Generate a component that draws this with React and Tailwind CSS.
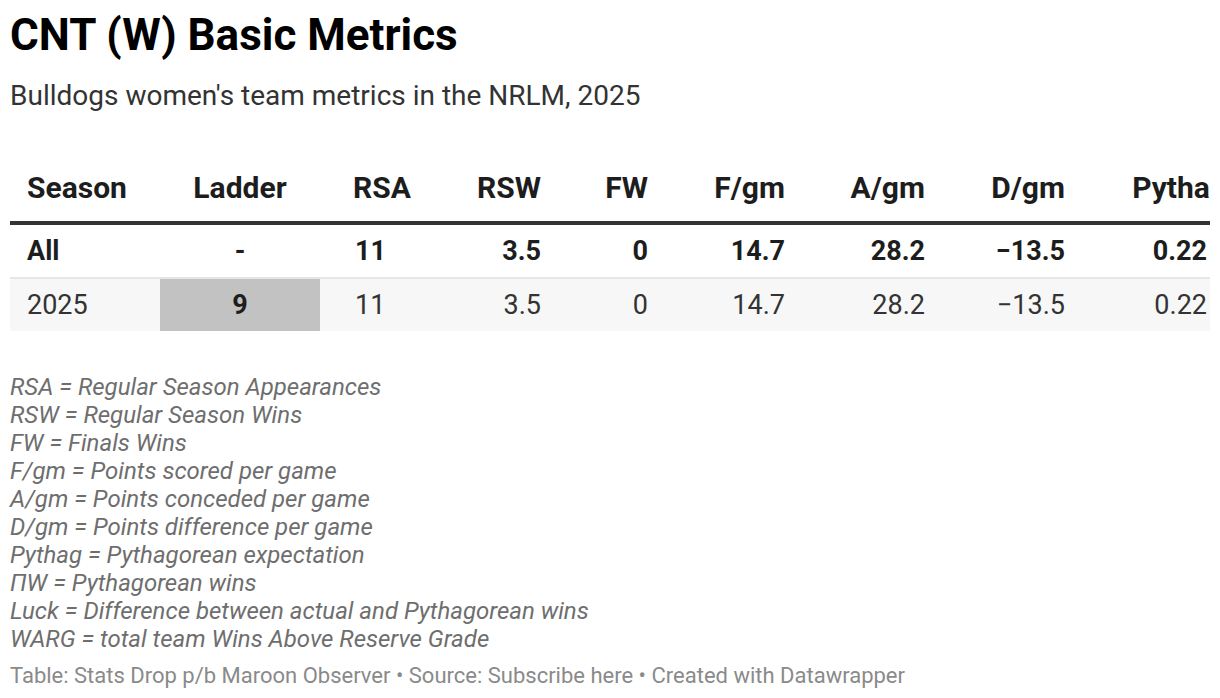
import React from "react";

const cols = "grid grid-cols-[150px_160px_110px_125px_107px_137px_140px_140px_157px]";

const notes = [
  "RSA = Regular Season Appearances",
  "RSW = Regular Season Wins",
  "FW = Finals Wins",
  "F/gm = Points scored per game",
  "A/gm = Points conceded per game",
  "D/gm = Points difference per game",
  "Pythag = Pythagorean expectation",
  "ΠW = Pythagorean wins",
  "Luck = Difference between actual and Pythagorean wins",
  "WARG = total team Wins Above Reserve Grade",
];

function Row({ vals, bold, bg, last }) {
  const w = bold ? "font-bold text-[#1d1d1d]" : "font-normal text-[#333333]";
  return (
    <div className={`${cols} ${bg} ${w} text-[27px] leading-[32px]`}>
      <div className="pl-[17px] py-[10px]">{vals[0]}</div>
      <div className={`text-center py-[10px] ${last ? "bg-[#c2c2c2] font-bold text-[#1d1d1d]" : ""}`}>{vals[1]}</div>
      <div className="pl-[35px] py-[10px]">{vals[2]}</div>
      <div className="text-right pr-[14px] py-[10px]">{vals[3]}</div>
      <div className="text-right pr-[14px] py-[10px]">{vals[4]}</div>
      <div className="text-right pr-[14px] py-[10px]">{vals[5]}</div>
      <div className="text-right pr-[14px] py-[10px]">{vals[6]}</div>
      <div className="text-right pr-[14px] py-[10px]">{vals[7]}</div>
      <div className="text-right pr-[29px] py-[10px]">{vals[8]}</div>
    </div>
  );
}

export default function App() {
  return (
    <div className="w-[1220px] h-[698px] overflow-hidden bg-white font-['Roboto','Liberation_Sans',sans-serif]">
      <div className="px-[10px] pt-[9px]">
        <h1 className="text-[44px] leading-[52px] font-bold text-[#000000]">CNT (W) Basic Metrics</h1>
        <p className="mt-[19px] text-[28px] leading-[32px] text-[#333333]">Bulldogs women's team metrics in the NRLM, 2025</p>
        <div className="mt-[58px] w-[1200px] overflow-hidden">
          <div className="w-[1226px]">
            <div className={`${cols} font-bold text-[30px] leading-[36px] text-[#1d1d1d] border-b-4 border-[#333333] pb-[15px]`}>
              <div className="pl-[17px]">Season</div>
              <div className="text-center">Ladder</div>
              <div className="pl-[33px]">RSA</div>
              <div className="text-right pr-[14px]">RSW</div>
              <div className="text-right pr-[14px]">FW</div>
              <div className="text-right pr-[14px]">F/gm</div>
              <div className="text-right pr-[14px]">A/gm</div>
              <div className="text-right pr-[14px]">D/gm</div>
              <div className="text-right pr-[9px]">Pythag</div>
            </div>
            <div className="border-b-2 border-[#e6e6e6]">
              <Row bold bg="bg-white" vals={["All", "-", "11", "3.5", "0", "14.7", "28.2", "−13.5", "0.22"]} />
            </div>
            <Row last bg="bg-[#f7f7f7]" vals={["2025", "9", "11", "3.5", "0", "14.7", "28.2", "−13.5", "0.22"]} />
          </div>
        </div>
        <div className="mt-[42px] text-[24px] leading-[28px] italic text-[#6e6e6e]">
          {notes.map((n) => (
            <div key={n}>{n}</div>
          ))}
        </div>
        <div className="mt-[9px] text-[22px] leading-[28px] text-[#8a8a8a]">
          Table: Stats Drop p/b Maroon Observer • Source: Subscribe here • Created with Datawrapper
        </div>
      </div>
    </div>
  );
}
